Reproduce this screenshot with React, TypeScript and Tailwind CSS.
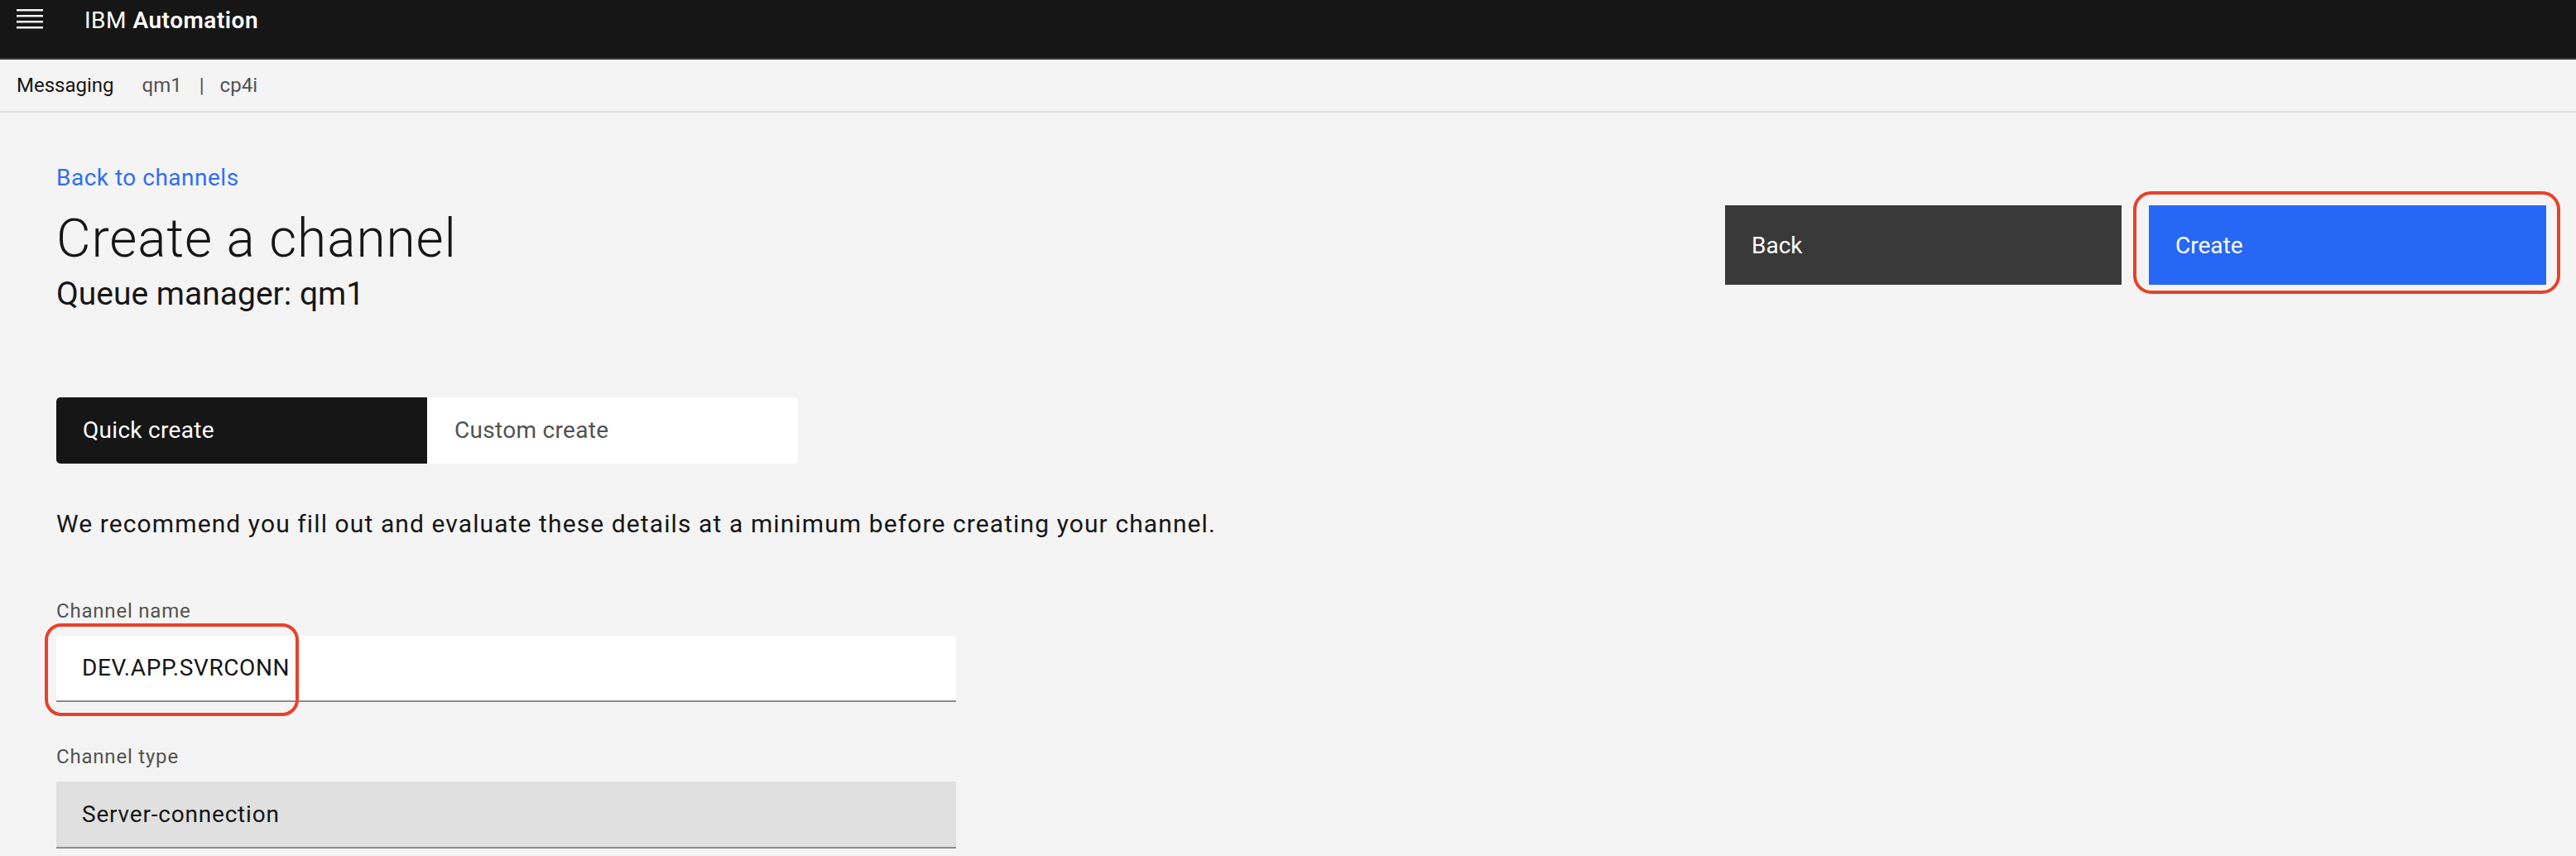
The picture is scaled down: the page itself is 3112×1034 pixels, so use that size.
import React from "react";

const font = { fontFamily: "Roboto, 'Liberation Sans', sans-serif" };

function Hamburger() {
  return (
    <svg width="32" height="24" viewBox="0 0 32 24" className="shrink-0">
      <rect x="0" y="0" width="32" height="2.5" fill="#f4f4f4" />
      <rect x="0" y="7" width="32" height="2.5" fill="#f4f4f4" />
      <rect x="0" y="14" width="32" height="2.5" fill="#f4f4f4" />
      <rect x="0" y="21" width="32" height="2.5" fill="#f4f4f4" />
    </svg>
  );
}

export default function App() {
  return (
    <div className="min-h-screen w-full bg-[#f4f4f4] text-[#161616] overflow-hidden" style={font}>
      {/* top header */}
      <header className="h-[72px] bg-[#161616] border-b-2 border-[#393939] flex items-start pt-[11px] pl-[20px]">
        <Hamburger />
        <div className="ml-[50px] text-[28px] leading-[28px] tracking-[0.5px] text-white">
          IBM <span className="font-semibold">Automation</span>
        </div>
      </header>

      {/* breadcrumb bar */}
      <div className="h-[64px] border-b-2 border-[#e0e0e0] flex items-center px-[20px] text-[24px] leading-[24px]">
        <span className="text-[#161616]">Messaging</span>
        <span className="ml-[34px] text-[#525252]">qm1</span>
        <span className="ml-[21px] text-[#525252]">|</span>
        <span className="ml-[19px] text-[#525252]">cp4i</span>
      </div>

      <main className="pl-[68px] pr-[36px] pt-[65px]">
        <div className="flex items-start justify-between">
          <div className="flex flex-col">
            <a className="text-[28px] leading-[28px] tracking-[0.5px] text-[#2e6ef5]">Back to channels</a>
            <h1 className="mt-[28px] text-[64px] leading-[64px] tracking-[0.9px] font-light">Create a channel</h1>
            <h2 className="mt-[14px] text-[39px] leading-[40px]">Queue manager: qm1</h2>
          </div>

          <div className="mt-[47px] flex gap-[33px]">
            <button className="w-[479px] h-[96px] bg-[#393939] text-white text-[28px] text-left pl-[32px] pt-[2px] flex items-center">
              Back
            </button>
            <div className="relative">
              <button className="w-[480px] h-[96px] bg-[#2767f5] text-white text-[28px] text-left pl-[32px] pt-[2px] flex items-center">
                Create
              </button>
              <div className="absolute -left-[19px] -top-[17px] -right-[17px] -bottom-[11px] border-4 border-[#e8412a] rounded-[22px] pointer-events-none" />
            </div>
          </div>
        </div>

        {/* content switcher */}
        <div className="mt-[105px] flex w-[896px] h-[80px] rounded-[5px] overflow-hidden text-[28px] tracking-[0.3px]">
          <div className="w-[448px] bg-[#161616] text-white flex items-center pl-[32px]">Quick create</div>
          <div className="w-[448px] bg-white text-[#525252] flex items-center pl-[33px]">Custom create</div>
        </div>

        <p className="mt-[58px] text-[30px] leading-[30px] tracking-[1.1px]">
          We recommend you fill out and evaluate these details at a minimum before creating your channel.
        </p>

        <label className="block mt-[78px] text-[24px] leading-[24px] tracking-[0.8px] text-[#525252]">Channel name</label>
        <div className="relative mt-[18px] w-[1087px] h-[80px] bg-white border-b-2 border-[#8d8d8d] flex items-center pl-[31px] text-[28px] tracking-[0.6px]">
          DEV.APP.SVRCONN
          <div className="absolute left-[-14px] top-[-15px] w-[307px] h-[112px] border-4 border-[#e8412a] rounded-[20px] pointer-events-none" />
        </div>

        <label className="block mt-[54px] text-[24px] leading-[24px] tracking-[0.8px] text-[#525252]">Channel type</label>
        <div className="mt-[18px] w-[1087px] h-[81px] bg-[#e0e0e0] border-b-2 border-[#8d8d8d] flex items-center pl-[31px] text-[28px] tracking-[0.8px]">
          Server-connection
        </div>
      </main>
    </div>
  );
}
